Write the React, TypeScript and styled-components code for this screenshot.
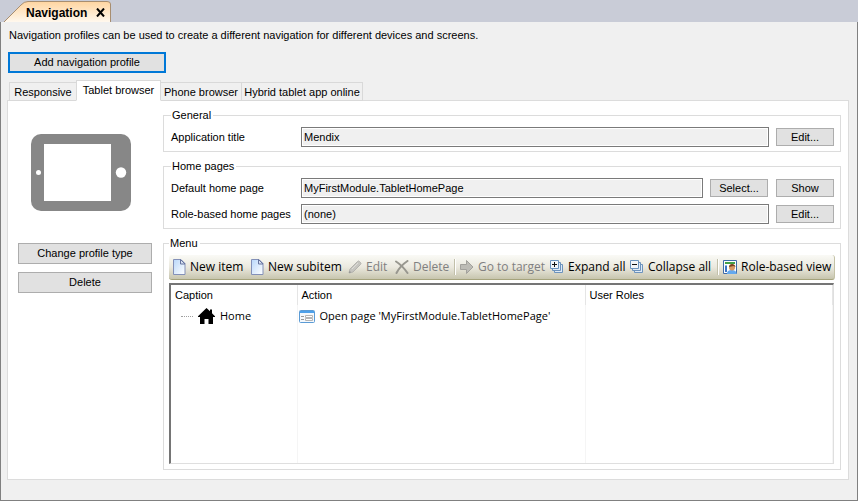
import React from "react";
import styled, { createGlobalStyle } from "styled-components";

const GlobalStyle = createGlobalStyle`
  *, *::before, *::after { box-sizing: border-box; }
  body { margin: 0; background: #f0f0f0; }
  button, input { font: inherit; color: inherit; }
  svg { flex: none; }
`;

const Window = styled.div`
  display: flex;
  flex-direction: column;
  min-height: 100vh;
  font: 11px/14px "Liberation Sans", Arial, sans-serif;
  color: #000;
  background: #f0f0f0;
`;

const DocumentTabs = styled.header`
  display: flex;
  align-items: flex-end;
  height: 22px;
  padding-left: 4px;
  background: #c9ccd7;
`;

const DocumentTab = styled.div`
  position: relative;
  display: flex;
  align-items: center;
  gap: 9px;
  width: 107px;
  height: 21px;
  padding: 2px 0 0 22px;
  font-size: 12px;
  font-weight: bold;
`;

const TabShape = styled.svg`
  position: absolute;
  inset: 0;
`;

const TabTitle = styled.span`
  position: relative;
`;

const CloseButton = styled.button`
  position: relative;
  display: flex;
  padding: 0;
  border: 0;
  background: none;
`;

const Page = styled.main`
  flex: 1;
  display: flex;
  flex-direction: column;
  align-items: flex-start;
  padding: 6px 8px 20px 6px;
  border: solid #808080;
  border-width: 0 1px 1px;
`;

const Intro = styled.p`
  margin: 0 2px 10px;
`;

const Button = styled.button<{ $small?: boolean }>`
  flex: none;
  width: ${(p) => (p.$small ? "58px" : "100%")};
  height: ${(p) => (p.$small ? "18px" : "21px")};
  padding: 0 0 ${(p) => (p.$small ? "0" : "2px")};
  line-height: 14px;
  border: 1px solid #adadad;
  background: #e1e1e1;
`;

const DefaultButton = styled(Button)`
  width: 158px;
  margin-left: 1px;
  border: 2px solid #0078d7;
`;

const ProfileTabs = styled.div`
  display: flex;
  align-items: flex-end;
  height: 21px;
  margin: 7px 0 -1px 3px;
`;

const ProfileTab = styled.button<{ $active?: boolean; $width: number }>`
  width: ${(p) => p.$width}px;
  height: ${(p) => (p.$active ? "21px" : "19px")};
  margin-left: -1px;
  padding: 0 0 ${(p) => (p.$active ? "2px" : "0")};
  white-space: nowrap;
  border: 1px solid #d9d9d9;
  border-bottom-color: ${(p) => (p.$active ? "#fff" : "#d9d9d9")};
  background: ${(p) => (p.$active ? "#fff" : "#f0f0f0")};
  z-index: ${(p) => (p.$active ? 1 : 0)};
`;

const Panel = styled.section`
  flex: 1;
  align-self: stretch;
  display: flex;
  gap: 11px;
  padding: 7px 7px 9px 10px;
  border: 1px solid #dcdcdc;
  background: #fff;
`;

const Side = styled.aside`
  flex: none;
  display: flex;
  flex-direction: column;
  align-items: center;
  gap: 8px;
  width: 134px;
  padding-top: 26px;
`;

const Device = styled.svg`
  margin: 0 8px 24px 0;
`;

const Groups = styled.div`
  flex: 1;
  min-width: 0;
  display: flex;
  flex-direction: column;
  gap: 7px;
`;

const Group = styled.fieldset<{ $grow?: boolean }>`
  flex: ${(p) => (p.$grow ? "1" : "none")};
  display: flex;
  flex-direction: column;
  gap: 6px;
  min-width: 0;
  margin: 0;
  padding: ${(p) => (p.$grow ? "5px 6px 5px 5px" : "5px 6px 4px 7px")};
  border: 1px solid #dcdcdc;
`;

const Legend = styled.legend`
  padding: 0 2px 0 1px;
`;

const Field = styled.div`
  display: flex;
  align-items: center;
  gap: 8px;
`;

const Label = styled.label`
  flex: none;
  width: 122px;
`;

const TextBox = styled.input`
  flex: 1;
  min-width: 0;
  height: 20px;
  margin-right: -1px;
  padding: 0 2px;
  border: 1px solid #7a7a7a;
  outline: 1px solid #fff;
  outline-offset: -2px;
  background: #f0f0f0;
`;

const Toolbar = styled.div`
  display: flex;
  align-items: center;
  height: 25px;
  margin-right: -1px;
  padding: 0 0 0 4px;
  font: 12px/16px "Open Sans", "Segoe UI", sans-serif;
  border-bottom: 1px solid #a5a37c;
  border-right: 1px solid #c4c2a6;
  border-radius: 3px;
  background: linear-gradient(#fafaf6, #ebe9df 50%, #c7c5ae);
`;

const Tool = styled.button<{ $width: number }>`
  flex: none;
  display: flex;
  align-items: center;
  gap: 4px;
  width: ${(p) => p.$width}px;
  padding: 0;
  white-space: nowrap;
  border: 0;
  background: none;
  &:disabled { color: #808080; }
`;

const Separator = styled.span`
  flex: none;
  width: 2px;
  height: 16px;
  margin: 0 4px 0 0;
  border-left: 1px solid #c2c0aa;
  border-right: 1px solid #fff;
`;

const TreeFrame = styled.div`
  flex: 1;
  margin-top: -3px;
  border: 1px solid #dfdfdf;
  border-top: 2px solid #757575;
  border-left: 2px solid #757575;
`;

const Tree = styled.table`
  width: 100%;
  height: 178px;
  table-layout: fixed;
  border-collapse: collapse;
`;

const Heading = styled.th<{ $width?: number }>`
  width: ${(p) => (p.$width ? `${p.$width}px` : "auto")};
  height: 20px;
  padding: 0 4px;
  text-align: left;
  font-weight: normal;
  border-right: 1px solid #e5e5e5;
`;

const Cell = styled.td`
  height: 22px;
  padding: 0;
  font: 11px/14px "Open Sans", Tahoma, sans-serif;
  border-right: 1px solid #f5f5f5;
`;

const Entry = styled.div<{ $inset: number }>`
  display: flex;
  align-items: center;
  gap: 5px;
  padding-left: ${(p) => p.$inset}px;
  white-space: nowrap;
`;

const Branch = styled.span`
  width: 12px;
  border-top: 1px dotted #a0a0a0;
`;

const Filler = styled.td`
  border-right: 1px solid #f5f5f5;
`;

const PageIcon = () => (
  <svg width="13" height="16" viewBox="0 0 13 16" aria-hidden="true">
    <defs>
      <linearGradient id="sheet" x2="1" y2="1">
        <stop offset="0" stopColor="#b9d7fa" /><stop offset="1" stopColor="#fff" />
      </linearGradient>
    </defs>
    <path d="M.5.5h7.500l4 4v11H.5z" fill="url(#sheet)" stroke="#8390b8" />
    <path d="M7.500.5v4.500H12z" fill="#d9e2f3" stroke="#66749f" />
  </svg>
);

const PencilIcon = () => (
  <svg width="14" height="14" viewBox="0 0 14 14" aria-hidden="true">
    <path d="M1 13l1-4L9.500 1.500q1-1 2 0l1 1q1 1 0 2L5 12z" fill="#c6c5c0" stroke="#b4b3ae" />
    <path d="M4 9l6-6" stroke="#deddd8" strokeWidth="1" />
    <path d="M1 13l.8-2 1.200 1.200z" fill="#888" />
  </svg>
);

const CrossIcon = () => (
  <svg width="14" height="14" viewBox="0 0 14 14" aria-hidden="true">
    <path d="M1 1.500C5 4 9 8 12.500 13M12.500 1C8 4 4 8 1.500 13" fill="none" stroke="#98978f" strokeWidth="2" strokeLinecap="round" />
  </svg>
);

const ArrowIcon = () => (
  <svg width="14" height="14" viewBox="0 0 14 14" aria-hidden="true">
    <path d="M.5 4.500h6v-4l6.500 6.500-6.500 6.500v-4h-6z" fill="#bdbcb6" stroke="#a2a19c" />
  </svg>
);

const StackIcon = ({ plus }: { plus?: boolean }) => (
  <svg width="14" height="14" viewBox="0 0 14 14" aria-hidden="true">
    <g fill="#dfeaf6" stroke="#6c93bd">
      <path d="M4.500 4.500h8v8h-8z" /><path d="M2.500 2.500h8v8h-8z" /><path d="M.5.5h8v8h-8z" fill="#f4f6f8" />
    </g>
    <path d={plus ? "M2 4.500h5M4.500 2v5" : "M2 4.500h5"} stroke="#111" />
  </svg>
);

const RoleIcon = () => (
  <svg width="14" height="14" viewBox="0 0 14 14" aria-hidden="true">
    <path d="M.5.5h13v13H.5z" fill="#fff" stroke="#3f6ba8" />
    <path d="M2 2h10v2H2z" fill="#44a047" />
    <path d="M2 5.500h2V12H2z" fill="#3974c4" />
    <path d="M4 14c0-3 1.500-4 4.500-4s5 1 5 4z" fill="#64a9ee" />
    <circle cx="9" cy="7.500" r="3" fill="#d89863" />
    <path d="M6 7c0-4 6-4 6.500 0l-2-1z" fill="#78411d" />
  </svg>
);

const HomeIcon = () => (
  <svg width="17" height="16" viewBox="0 0 17 16" aria-hidden="true">
    <path d="M8.500 0L12 3.200V1.500h2v3.700l3 3.100V9h-2v7h-4.500v-5h-4v5H2V9H0v-.7z" />
  </svg>
);

const FormIcon = () => (
  <svg width="16" height="13" viewBox="0 0 16 13" aria-hidden="true">
    <rect x=".5" y=".5" width="15" height="12" rx="1" fill="#f4f8fc" stroke="#5b9bd5" />
    <path d="M1 1h14v2H1z" fill="#4da0ea" />
    <path d="M2 6.500h3M2 9.500h3" stroke="#999" />
    <path d="M6.500 5.500h7v2h-7zM6.500 8.500h7v2h-7z" fill="#fff" stroke="#b4b4b4" />
  </svg>
);

const columns = [{ name: "Caption", width: 126 }, { name: "Action", width: 288 }, { name: "User Roles" }];

export default function App() {
  return (
    <Window>
      <GlobalStyle />
      <DocumentTabs>
        <DocumentTab>
          <TabShape width="107" height="21" viewBox="0 0 107 21" aria-hidden="true">
            <defs>
              <linearGradient id="tab" x2="0" y2="1">
                <stop offset="0" stopColor="#ffd5a0" /><stop offset="1" stopColor="#fff8ee" />
              </linearGradient>
            </defs>
            <path d="M0 21L17 4Q20 .5 24 .5H103Q106.500 .5 106.500 3V21" fill="url(#tab)" stroke="#a88e70" />
          </TabShape>
          <TabTitle>Navigation</TabTitle>
          <CloseButton aria-label="Close">
            <svg width="9" height="9" viewBox="0 0 9 9"><path d="M1 .5l7 8M8 .5l-7 8" stroke="#000" strokeWidth="2" /></svg>
          </CloseButton>
        </DocumentTab>
      </DocumentTabs>
      <Page>
        <Intro>Navigation profiles can be used to create a different navigation for different devices and screens.</Intro>
        <DefaultButton>Add navigation profile</DefaultButton>
        <ProfileTabs role="tablist">
          <ProfileTab role="tab" $width={68}>Responsive</ProfileTab>
          <ProfileTab role="tab" aria-selected $active $width={85}>Tablet browser</ProfileTab>
          <ProfileTab role="tab" $width={82}>Phone browser</ProfileTab>
          <ProfileTab role="tab" $width={122}>Hybrid tablet app online</ProfileTab>
        </ProfileTabs>
        <Panel>
          <Side>
            <Device width="100" height="77" viewBox="0 0 100 77" role="img" aria-label="Tablet">
              <rect width="100" height="77" rx="10" fill="#878787" />
              <path d="M13 10h67v57H13z" fill="#fff" />
              <circle cx="7.500" cy="38.500" r="2.500" fill="#fff" />
              <circle cx="90" cy="38.500" r="5.200" fill="#fff" />
            </Device>
            <Button>Change profile type</Button>
            <Button>Delete</Button>
          </Side>
          <Groups>
            <Group>
              <Legend>General</Legend>
              <Field>
                <Label htmlFor="title">Application title</Label>
                <TextBox id="title" readOnly defaultValue="Mendix" />
                <Button $small>Edit...</Button>
              </Field>
            </Group>
            <Group>
              <Legend>Home pages</Legend>
              <Field>
                <Label htmlFor="home">Default home page</Label>
                <TextBox id="home" readOnly defaultValue="MyFirstModule.TabletHomePage" />
                <Button $small>Select...</Button>
                <Button $small>Show</Button>
              </Field>
              <Field>
                <Label htmlFor="roles">Role-based home pages</Label>
                <TextBox id="roles" readOnly defaultValue="(none)" />
                <Button $small>Edit...</Button>
              </Field>
            </Group>
            <Group $grow>
              <Legend>Menu</Legend>
              <Toolbar role="toolbar">
                <Tool $width={78}><PageIcon />New item</Tool>
                <Tool $width={97}><PageIcon />New subitem</Tool>
                <Tool $width={47} disabled><PencilIcon />Edit</Tool>
                <Tool $width={59} disabled><CrossIcon />Delete</Tool>
                <Separator />
                <Tool $width={90} disabled><ArrowIcon />Go to target</Tool>
                <Tool $width={80}><StackIcon plus />Expand all</Tool>
                <Tool $width={87}><StackIcon />Collapse all</Tool>
                <Separator />
                <Tool $width={110}><RoleIcon />Role-based view</Tool>
              </Toolbar>
              <TreeFrame>
                <Tree>
                  <thead>
                    <tr>{columns.map((c) => <Heading key={c.name} $width={c.width}>{c.name}</Heading>)}</tr>
                  </thead>
                  <tbody>
                    <tr>
                      <Cell><Entry $inset={10}><Branch /><HomeIcon />Home</Entry></Cell>
                      <Cell><Entry $inset={1}><FormIcon />Open page 'MyFirstModule.TabletHomePage'</Entry></Cell>
                      <Cell />
                    </tr>
                    <tr><Filler /><Filler /><Filler /></tr>
                  </tbody>
                </Tree>
              </TreeFrame>
            </Group>
          </Groups>
        </Panel>
      </Page>
    </Window>
  );
}
